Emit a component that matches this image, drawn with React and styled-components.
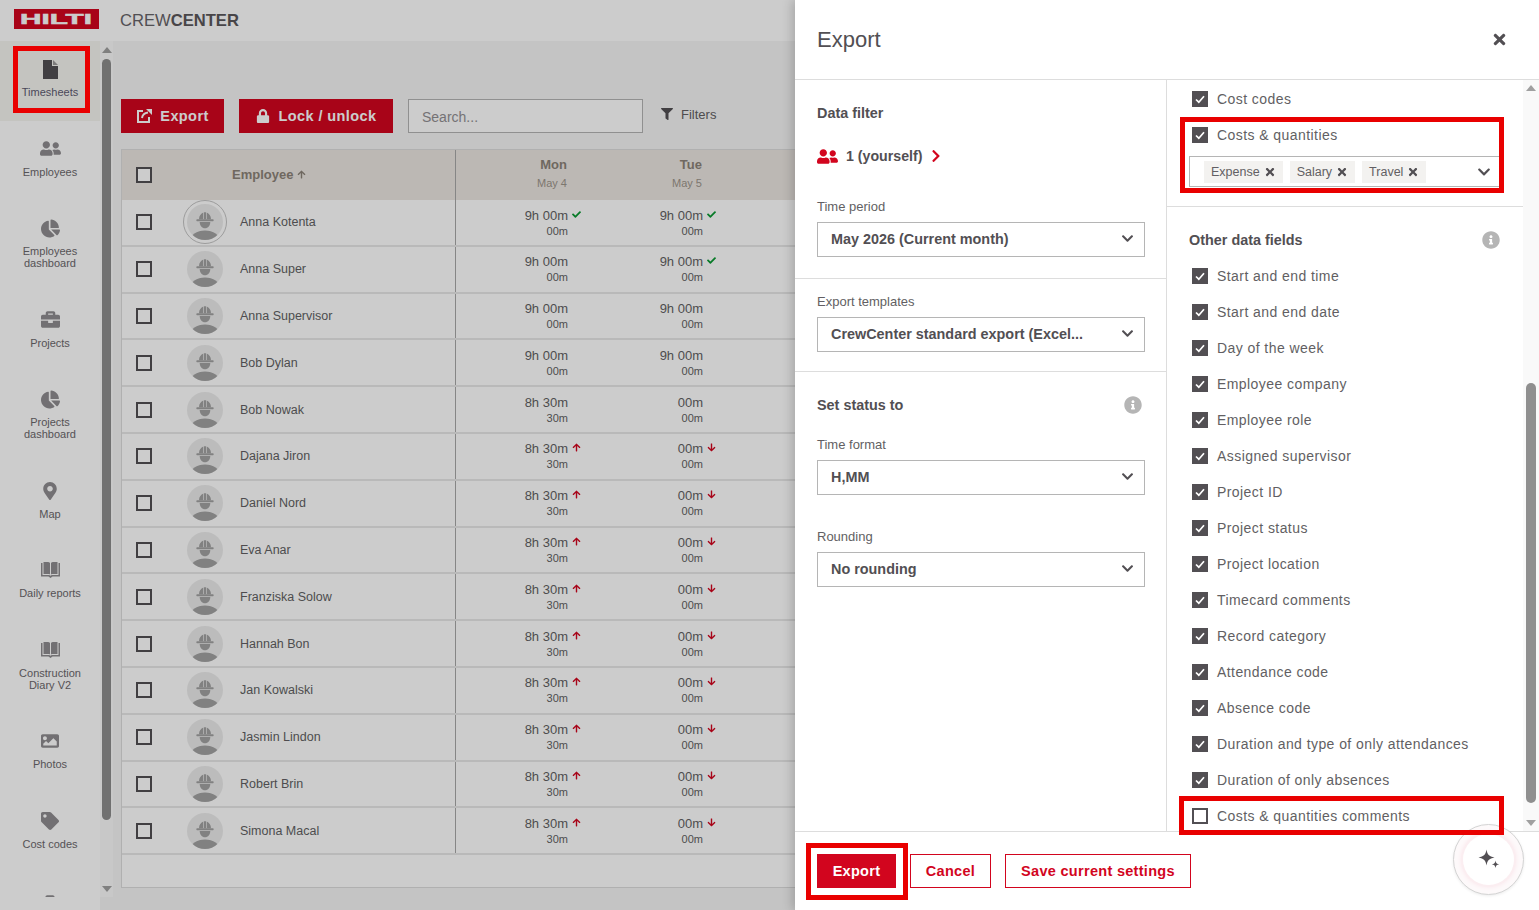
import React from "react";
import styled, { createGlobalStyle } from "styled-components";
import {
  FaArrowDown,
  FaArrowUp,
  FaBriefcase,
  FaChartPie,
  FaChevronDown,
  FaChevronRight,
  FaCheck,
  FaFilter,
  FaImage,
  FaInfoCircle,
  FaLock,
  FaMapMarkerAlt,
  FaTag,
  FaTimes,
  FaToolbox,
  FaUserFriends,
} from "react-icons/fa";

const RED = "#d2051e";
const TEXT = "#524f53";
const FONT = `"Liberation Sans", Arial, sans-serif`;

const GlobalStyle = createGlobalStyle`
  html, body {
    margin: 0;
    padding: 0;
    width: 100%;
    height: 100%;
    overflow: hidden;
    font-family: ${FONT};
    color: ${TEXT};
  }
  * {
    box-sizing: border-box;
  }
`;

const Screen = styled.div`
  position: relative;
  width: 1539px;
  height: 910px;
  overflow: hidden;
  background: #f5f5f5;
`;

const Page = styled.div`
  display: flex;
  flex-direction: column;
  height: 910px;
`;

const Header = styled.header`
  display: flex;
  align-items: center;
  flex: 0 0 41px;
  padding-left: 14px;
  background: #ffffff;
`;

const Logo = styled.svg`
  display: block;
  width: 85px;
  height: 20px;
  margin-top: -3px;
`;

const Brand = styled.div`
  margin: 1px 0 0 21px;
  font-size: 16.6px;
  color: #666368;
  b {
    color: #5a575b;
  }
`;

const Body = styled.div`
  display: flex;
  flex: 1;
  min-height: 0;
`;

const Sidebar = styled.nav`
  flex: 0 0 100px;
  background: #ffffff;
`;

const NavList = styled.div`
  height: 856px;
  overflow: hidden;
`;

const NavItem = styled.div`
  display: flex;
  flex-direction: column;
  align-items: center;
  height: ${(p) => (p.$lines === 2 ? "91.5px" : "79.5px")};
  padding-top: ${(p) => p.$top || 18}px;
  background: ${(p) => (p.$active ? "#f5f5f0" : "transparent")};
`;

const NavIcon = styled.span`
  display: flex;
  align-items: center;
  justify-content: center;
  height: 20px;
  font-size: 18px;
  color: ${(p) => (p.$active ? "#524f53" : "#8f8d90")};
`;

const NavLabel = styled.span`
  margin-top: 7px;
  width: 82px;
  font-size: 11px;
  line-height: 12px;
  text-align: center;
  color: ${(p) => (p.$active ? "#5d5a70" : "#6b686c")};
`;

const Track = styled.div`
  display: flex;
  flex-direction: column;
  align-items: center;
  flex: 0 0 ${(p) => p.$width}px;
  height: ${(p) => p.$height};
  padding: ${(p) => p.$pad};
  background: ${(p) => p.$bg};
`;

const ArrowUp = styled.i`
  width: 0;
  height: 0;
  border-left: 5px solid transparent;
  border-right: 5px solid transparent;
  border-bottom: 6px solid #a0a0a0;
`;

const ArrowDown = styled(ArrowUp)`
  margin-top: auto;
  border-bottom: 0;
  border-top: 6px solid #a0a0a0;
`;

const Thumb = styled.div`
  width: ${(p) => p.$width}px;
  height: ${(p) => p.$height}px;
  margin-top: ${(p) => p.$gap}px;
  border-radius: 5px;
  background: ${(p) => p.$color};
`;

const Main = styled.main`
  flex: 1;
  min-width: 0;
  overflow: hidden;
  padding: 58px 0 0 8px;
`;

const Toolbar = styled.div`
  display: flex;
  align-items: center;
  gap: 15px;
  height: 34px;
`;

const SolidButton = styled.button`
  display: inline-flex;
  align-items: center;
  justify-content: center;
  gap: ${(p) => p.$gap || 8}px;
  width: ${(p) => p.$width}px;
  height: 34px;
  border: 0;
  padding: 0;
  font-family: ${FONT};
  font-size: 14.5px;
  font-weight: 700;
  letter-spacing: 0.4px;
  color: #ffffff;
  background: ${RED};
`;

const Search = styled.input`
  width: 235px;
  height: 34px;
  border: 1px solid #b5b5b5;
  padding: 2px 13px 0;
  font-family: ${FONT};
  font-size: 14px;
  background: #ffffff;
  &::placeholder {
    color: #928f93;
    opacity: 1;
  }
`;

const Filters = styled.div`
  display: flex;
  align-items: center;
  gap: 8px;
  margin: -4px 0 0 3px;
  font-size: 13px;
  color: #625f63;
`;

const Table = styled.div`
  width: 1500px;
  height: 739px;
  margin-top: 16px;
  border: 1px solid #dcdcdc;
  background: #ffffff;
`;

const HeadRow = styled.div`
  display: flex;
  height: 50px;
  background: #ebe6e1;
  color: #8b8378;
`;

const Row = styled.div`
  display: flex;
  height: 46.8px;
  border-bottom: 2px solid #e8e8e8;
`;

const EmployeeCell = styled.div`
  display: flex;
  align-items: center;
  flex: 0 0 334px;
  padding-left: 14px;
  border-right: 1px solid #a8a8a8;
`;

const EmployeeHead = styled.div`
  display: flex;
  align-items: center;
  gap: 4px;
  margin: -1px 0 0 80px;
  font-size: 13px;
  font-weight: 700;
`;

const Box = styled.span`
  display: inline-flex;
  align-items: center;
  justify-content: center;
  flex: 0 0 16px;
  width: 16px;
  height: 16px;
  border: 2px solid ${TEXT};
  background: ${(p) => (p.$checked ? TEXT : "#ffffff")};
`;

const AvatarWrap = styled.span`
  display: flex;
  align-items: center;
  justify-content: center;
  flex: 0 0 36px;
  width: 36px;
  height: 36px;
  margin-left: 35px;
  border-radius: 50%;
  outline: ${(p) => (p.$ring ? "1px solid #c4c4c4" : "0")};
  outline-offset: 3px;
`;

const Name = styled.span`
  margin-left: 17px;
  font-size: 12.5px;
  color: #625f63;
`;

const DayHead = styled.div`
  flex: 0 0 135px;
  padding: 7px 24px 0 0;
  text-align: right;
  font-size: 13px;
  font-weight: 700;
  line-height: 15px;
  span {
    display: block;
    margin-top: 4px;
    font-size: 11px;
    font-weight: 400;
    line-height: 14px;
    color: #9c958b;
  }
`;

const DayCell = styled.div`
  flex: 0 0 135px;
  padding: 6.5px 23px 0 0;
  text-align: right;
`;

const Hours = styled.div`
  font-size: 13px;
  line-height: 17px;
  color: #625f63;
`;

const HoursValue = styled.span`
  position: relative;
`;

const Sub = styled.div`
  font-size: 11px;
  line-height: 15px;
  color: #625f63;
`;

const Mark = styled.span`
  position: absolute;
  left: 100%;
  top: 2px;
  margin-left: 4px;
  font-size: 9px;
  line-height: 9px;
  color: ${(p) => p.$color};
`;

const Backdrop = styled.div`
  position: absolute;
  inset: 0;
  background: rgba(0, 0, 0, 0.2);
`;

const Drawer = styled.aside`
  position: absolute;
  top: 0;
  right: 0;
  display: flex;
  flex-direction: column;
  width: 744px;
  height: 910px;
  background: #ffffff;
  box-shadow: -3px 0 10px rgba(0, 0, 0, 0.18);
`;

const DrawerHead = styled.div`
  display: flex;
  align-items: center;
  justify-content: space-between;
  flex: 0 0 80px;
  padding: 0 31px 0 22px;
  border-bottom: 1px solid #dddddd;
`;

const Title = styled.h1`
  margin: 0;
  font-size: 22px;
  font-weight: 400;
  color: ${TEXT};
`;

const Close = styled.span`
  display: flex;
  font-size: 17px;
  color: ${TEXT};
`;

const Columns = styled.div`
  display: flex;
  flex: 1;
  min-height: 0;
`;

const LeftColumn = styled.div`
  flex: 0 0 372px;
  border-right: 1px solid #dddddd;
`;

const Section = styled.section`
  height: ${(p) => p.$height}px;
  padding: ${(p) => p.$top}px 21px 0 22px;
  border-bottom: ${(p) => (p.$last ? "0" : "1px solid #dddddd")};
`;

const Heading = styled.div`
  display: flex;
  align-items: center;
  justify-content: space-between;
  height: 22px;
  padding-right: ${(p) => p.$inset || 0}px;
  font-size: 14.4px;
  font-weight: 700;
  color: ${TEXT};
`;

const People = styled.div`
  display: flex;
  align-items: center;
  height: 20px;
  margin-top: 22px;
  font-size: 14.2px;
  font-weight: 700;
  color: ${TEXT};
  svg {
    color: ${RED};
  }
  span {
    margin: 0 7px 0 8px;
  }
`;

const FieldLabel = styled.div`
  height: 16px;
  margin-top: ${(p) => p.$gap}px;
  font-size: 13px;
  line-height: 16px;
  color: #625f63;
`;

const Select = styled.div`
  display: flex;
  align-items: center;
  justify-content: space-between;
  height: 35px;
  margin-top: 7px;
  padding: 0 10px 2px 13px;
  border: 1px solid #b5b5b5;
  font-size: 14.4px;
  font-weight: 700;
  color: ${TEXT};
`;

const RightColumn = styled.div`
  flex: 1;
  min-width: 0;
  overflow: hidden;
`;

const FieldGroup = styled.div`
  padding: 1px 22px 19px;
  border-bottom: 1px solid #dddddd;
`;

const OtherFields = styled.div`
  padding: 22px 22px 0;
`;

const CheckRow = styled.div`
  display: flex;
  align-items: center;
  height: 36px;
  padding-left: 3px;
  font-size: 14px;
  letter-spacing: 0.43px;
  color: #625f63;
  ${Box} {
    margin-right: 9px;
  }
`;

const TagSelect = styled.div`
  display: flex;
  align-items: center;
  height: 31px;
  margin-top: 3px;
  padding: 0 10px 0 14px;
  border: 1px solid #b5b5b5;
  border-right: 0;
  svg.chevron {
    margin-left: auto;
  }
`;

const Tag = styled.span`
  display: flex;
  align-items: center;
  gap: 4px;
  height: 22px;
  margin-right: 7px;
  padding: 0 7px;
  font-size: 12.5px;
  color: #625f63;
  background: #f3f2f0;
`;

const Fields = styled.div`
  margin-top: 7px;
`;

const Footer = styled.div`
  display: flex;
  gap: 14px;
  flex: 0 0 79px;
  padding: 22px 0 0 22px;
  border-top: 1px solid #dddddd;
`;

const FooterButton = styled.button`
  width: ${(p) => p.$width}px;
  height: 34px;
  border: 1px solid ${RED};
  padding: 0;
  font-family: ${FONT};
  font-size: 14.5px;
  font-weight: 700;
  letter-spacing: 0.3px;
  color: ${(p) => (p.$primary ? "#ffffff" : RED)};
  background: ${(p) => (p.$primary ? RED : "#ffffff")};
`;

const Assistant = styled.div`
  position: absolute;
  left: 1453px;
  top: 824px;
  display: flex;
  align-items: center;
  justify-content: center;
  width: 71px;
  height: 71px;
  border: 1px solid #d4d4d4;
  border-radius: 50%;
  background: #fdf9fa;
  box-shadow: 0 1px 3px rgba(0, 0, 0, 0.08);
`;

const AssistantInner = styled.div`
  display: flex;
  align-items: center;
  justify-content: center;
  width: 51px;
  height: 51px;
  border-radius: 50%;
  background: #ffffff;
  box-shadow: 0 0 0 2px #fbeef1, 0 0 4px 2px #fae6eb;
`;

const Annotation = styled.div`
  position: absolute;
  left: ${(p) => p.$x}px;
  top: ${(p) => p.$y}px;
  width: ${(p) => p.$w}px;
  height: ${(p) => p.$h}px;
  border: 5px solid #e90000;
  pointer-events: none;
`;

const FileIcon = () => (
  <svg width="15" height="19" viewBox="0 0 15 19">
    <path d="M0 0h9v6h6v13H0z" fill="currentColor" />
    <path d="M10 0l5 5h-5z" fill="currentColor" opacity="0.55" />
  </svg>
);

const BookIcon = () => (
  <svg width="19" height="16" viewBox="0 0 19 16">
    <path
      d="M0 1h1.500v12H8c.6 0 1 .3 1.500.8.5-.5.9-.8 1.500-.8h6.500V1H19v13.500h-7.500L9.500 16l-2-1.500H0z"
      fill="currentColor"
    />
    <path d="M2.500 0H7c.9 0 1.500.4 2 1v11.500c-.5-.4-1.100-.5-2-.5H2.500z" fill="currentColor" />
    <path d="M16.500 0H12c-.9 0-1.500.4-2 1v11.500c.5-.4 1.100-.5 2-.5h4.500z" fill="currentColor" />
  </svg>
);

const ExportIcon = () => (
  <svg width="16" height="16" viewBox="0 0 16 16" fill="none" stroke="#fff">
    <path d="M7 3H2v11h11V9" strokeWidth="2" />
    <path d="M6 10c.4-3 2.500-5 6-5.500" strokeWidth="2" />
    <path d="M10 1h6v6z" fill="#fff" stroke="none" />
  </svg>
);

const CheckMark = () => (
  <svg width="12" height="12" viewBox="0 0 12 12" fill="none">
    <path d="M2 6.500l2.800 2.700L10 3.200" stroke="#ffffff" strokeWidth="1.700" />
  </svg>
);

const Avatar = ({ ring }) => (
  <AvatarWrap $ring={ring}>
    <svg width="36" height="36" viewBox="0 0 36 36">
      <defs>
        <clipPath id="avatar-clip">
          <circle cx="18" cy="18" r="18" />
        </clipPath>
      </defs>
      <circle cx="18" cy="18" r="18" fill="#ececec" />
      <g clipPath="url(#avatar-clip)" fill="#a2a2a2">
        <path d="M12 15.300c0-3.500 2-6 4.300-6.800v6.800zM17 8.200h2v7.100h-2zM19.700 8.500c2.300.8 4.300 3.300 4.300 6.800h-4.300z" />
        <rect x="9.300" y="15.300" width="17.400" height="1.900" rx="0.900" />
        <path d="M12.700 18h10.600c0 3.600-2.300 6.300-5.300 6.300s-5.300-2.700-5.300-6.300z" />
        <ellipse cx="18" cy="37" rx="15" ry="10.500" />
      </g>
    </svg>
  </AvatarWrap>
);

const Sparkle = () => (
  <svg width="24" height="24" viewBox="0 0 24 24" fill="#524f53">
    <path d="M9.500 1.500c.8 5 2.500 7 8 8-5.500 1-7.200 3-8 8-.8-5-2.500-7-8-8 5.500-1 7.200-3 8-8z" />
    <path d="M18.500 12.500c.4 2.600 1.200 3.400 3.800 3.800-2.600.4-3.400 1.200-3.800 3.800-.4-2.600-1.200-3.400-3.800-3.800 2.600-.4 3.400-1.200 3.800-3.800z" />
  </svg>
);

const navItems = [
  { label: "Timesheets", icon: <FileIcon />, active: true },
  { label: "Employees", icon: <FaUserFriends size={21} /> },
  { label: "Employees dashboard", icon: <FaChartPie size={19} />, lines: 2 },
  { label: "Projects", icon: <FaBriefcase size={19} /> },
  { label: "Projects dashboard", icon: <FaChartPie size={19} />, lines: 2 },
  { label: "Map", icon: <FaMapMarkerAlt size={18} /> },
  { label: "Daily reports", icon: <BookIcon /> },
  { label: "Construction Diary V2", icon: <BookIcon />, lines: 2 },
  { label: "Photos", icon: <FaImage size={18} /> },
  { label: "Cost codes", icon: <FaTag size={18} /> },
  { label: "", icon: <FaToolbox size={18} />, top: 21 },
];

const GREEN = "#0a9a32";

const ok = { hours: "9h 00m", sub: "00m" };
const rows = [
  { name: "Anna Kotenta", ring: true, mon: { ...ok, mark: "ok" }, tue: { ...ok, mark: "ok" } },
  { name: "Anna Super", mon: ok, tue: { ...ok, mark: "ok" } },
  { name: "Anna Supervisor", mon: ok, tue: ok },
  { name: "Bob Dylan", mon: ok, tue: ok },
  { name: "Bob Nowak", mon: { hours: "8h 30m", sub: "30m" }, tue: { hours: "00m", sub: "00m" } },
  ...[
    "Dajana Jiron",
    "Daniel Nord",
    "Eva Anar",
    "Franziska Solow",
    "Hannah Bon",
    "Jan Kowalski",
    "Jasmin Lindon",
    "Robert Brin",
    "Simona Macal",
  ].map((name) => ({
    name,
    mon: { hours: "8h 30m", sub: "30m", mark: "up" },
    tue: { hours: "00m", sub: "00m", mark: "down" },
  })),
];

const otherFields = [
  "Start and end time",
  "Start and end date",
  "Day of the week",
  "Employee company",
  "Employee role",
  "Assigned supervisor",
  "Project ID",
  "Project status",
  "Project location",
  "Timecard comments",
  "Record category",
  "Attendance code",
  "Absence code",
  "Duration and type of only attendances",
  "Duration of only absences",
];

const Day = ({ value }) => (
  <DayCell>
    <Hours>
      <HoursValue>
        {value.hours}
        {value.mark === "ok" && (
          <Mark $color={GREEN}>
            <FaCheck />
          </Mark>
        )}
        {value.mark === "up" && (
          <Mark $color={RED}>
            <FaArrowUp />
          </Mark>
        )}
        {value.mark === "down" && (
          <Mark $color={RED}>
            <FaArrowDown />
          </Mark>
        )}
      </HoursValue>
    </Hours>
    <Sub>{value.sub}</Sub>
  </DayCell>
);

const Check = ({ label, checked = true }) => (
  <CheckRow>
    <Box $checked={checked}>{checked && <CheckMark />}</Box>
    {label}
  </CheckRow>
);

const Dropdown = ({ value }) => (
  <Select>
    {value}
    <FaChevronDown size={13} color={TEXT} />
  </Select>
);

const App = () => {
  return (
    <Screen>
      <GlobalStyle />
      <Page>
        <Header>
          <Logo viewBox="0 0 85 20">
            <rect width="85" height="20" fill={RED} />
            <text
              x="42"
              y="15"
              textAnchor="middle"
              textLength="72"
              lengthAdjust="spacingAndGlyphs"
              fontFamily={FONT}
              fontWeight="700"
              fontSize="14"
              fill="#fff"
              stroke="#fff"
              strokeWidth="0.5"
            >
              HILTI
            </text>
          </Logo>
          <Brand>
            CREW<b>CENTER</b>
          </Brand>
        </Header>
        <Body>
          <Sidebar>
            <NavList>
              {navItems.map((item, i) => (
                <NavItem key={i} $lines={item.lines} $active={item.active} $top={item.top}>
                  <NavIcon $active={item.active}>{item.icon}</NavIcon>
                  <NavLabel $active={item.active}>{item.label}</NavLabel>
                </NavItem>
              ))}
            </NavList>
          </Sidebar>
          <Track $width={13} $height="856px" $pad="6px 0 5px" $bg="#fbfbfb">
            <ArrowUp />
            <Thumb $width={9} $height={761} $gap={6} $color="#8c8c8c" />
            <ArrowDown />
          </Track>
          <Main>
            <Toolbar>
              <SolidButton $width={103}>
                <ExportIcon />
                Export
              </SolidButton>
              <SolidButton $width={154} $gap={9}>
                <FaLock size={14} />
                Lock / unlock
              </SolidButton>
              <Search placeholder="Search..." readOnly />
              <Filters>
                <FaFilter size={12} color="#524f53" />
                Filters
              </Filters>
            </Toolbar>
            <Table>
              <HeadRow>
                <EmployeeCell>
                  <Box />
                  <EmployeeHead>
                    Employee <FaArrowUp size={9} />
                  </EmployeeHead>
                </EmployeeCell>
                <DayHead>
                  Mon<span>May 4</span>
                </DayHead>
                <DayHead>
                  Tue<span>May 5</span>
                </DayHead>
              </HeadRow>
              {rows.map((row) => (
                <Row key={row.name}>
                  <EmployeeCell>
                    <Box />
                    <Avatar ring={row.ring} />
                    <Name>{row.name}</Name>
                  </EmployeeCell>
                  <Day value={row.mon} />
                  <Day value={row.tue} />
                </Row>
              ))}
            </Table>
          </Main>
        </Body>
      </Page>
      <Backdrop />
      <Drawer>
        <DrawerHead>
          <Title>Export</Title>
          <Close>
            <FaTimes />
          </Close>
        </DrawerHead>
        <Columns>
          <LeftColumn>
            <Section $height={199} $top={22}>
              <Heading>Data filter</Heading>
              <People>
                <FaUserFriends size={21} />
                <span>1 (yourself)</span>
                <FaChevronRight size={14} />
              </People>
              <FieldLabel $gap={33}>Time period</FieldLabel>
              <Dropdown value="May 2026 (Current month)" />
            </Section>
            <Section $height={93} $top={15}>
              <FieldLabel $gap={0}>Export templates</FieldLabel>
              <Dropdown value="CrewCenter standard export (Excel..." />
            </Section>
            <Section $height={340} $top={22} $last>
              <Heading $inset={3}>
                Set status to
                <FaInfoCircle size={18} color="#b5b5b5" />
              </Heading>
              <FieldLabel $gap={21}>Time format</FieldLabel>
              <Dropdown value="H,MM" />
              <FieldLabel $gap={34}>Rounding</FieldLabel>
              <Dropdown value="No rounding" />
            </Section>
          </LeftColumn>
          <RightColumn>
            <FieldGroup>
              <Check label="Cost codes" />
              <Check label="Costs & quantities" />
              <TagSelect>
                <Tag>
                  Expense <FaTimes size={12} color={TEXT} />
                </Tag>
                <Tag>
                  Salary <FaTimes size={12} color={TEXT} />
                </Tag>
                <Tag>
                  Travel <FaTimes size={12} color={TEXT} />
                </Tag>
                <FaChevronDown className="chevron" size={14} color={TEXT} />
              </TagSelect>
            </FieldGroup>
            <OtherFields>
              <Heading $inset={1}>
                Other data fields
                <FaInfoCircle size={18} color="#b5b5b5" />
              </Heading>
              <Fields>
                {otherFields.map((label) => (
                  <Check key={label} label={label} />
                ))}
                <Check label="Costs & quantities comments" checked={false} />
              </Fields>
            </OtherFields>
          </RightColumn>
          <Track $width={16} $height="auto" $pad="5px 0" $bg="#f9f9f9">
            <ArrowUp />
            <Thumb $width={10} $height={420} $gap={292} $color="#8f8f8f" />
            <ArrowDown />
          </Track>
        </Columns>
        <Footer>
          <FooterButton $primary $width={79}>
            Export
          </FooterButton>
          <FooterButton $width={81}>Cancel</FooterButton>
          <FooterButton $width={186}>Save current settings</FooterButton>
        </Footer>
      </Drawer>
      <Assistant>
        <AssistantInner>
          <Sparkle />
        </AssistantInner>
      </Assistant>
      <Annotation $x={13} $y={46} $w={77} $h={67} />
      <Annotation $x={1180} $y={117} $w={324} $h={76} />
      <Annotation $x={1179} $y={796} $w={325} $h={39} />
      <Annotation $x={806} $y={843} $w={102} $h={57} />
    </Screen>
  );
};

export default App;
